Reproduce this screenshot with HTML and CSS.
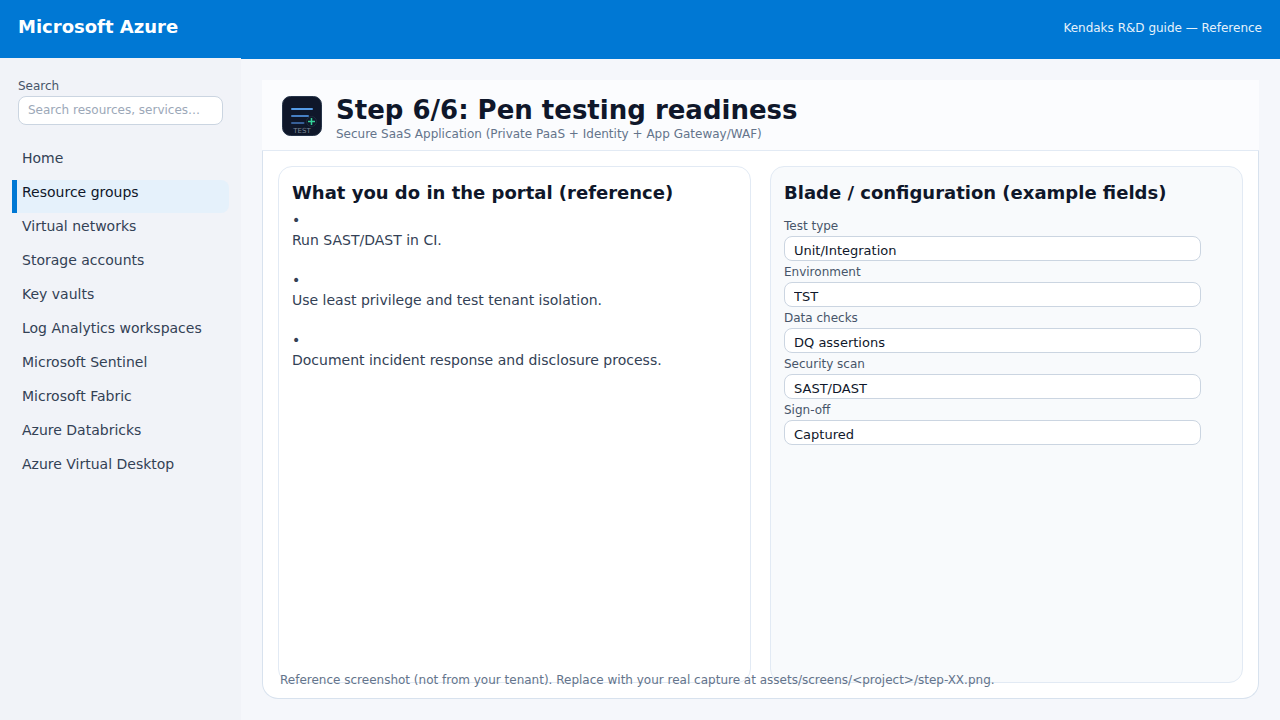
FILE: index.html
```html
<!DOCTYPE html>
<html lang="en">
<head>
<meta charset="utf-8">
<meta name="viewport" content="width=device-width, initial-scale=1">
<title>Step 6/6: Pen testing readiness</title>
<link rel="stylesheet" href="styles.css">
</head>
<body>
<header class="topbar">
  <div class="brand">Microsoft Azure</div>
  <div class="guide">Kendaks R&amp;D guide — Reference</div>
</header>
<div class="shell">
  <aside class="sidebar">
    <div class="search">
      <label for="search">Search</label>
      <input id="search" type="text" placeholder="Search resources, services…">
    </div>
    <nav class="nav">
      <a href="#">Home</a>
      <a href="#" class="active" aria-current="page">Resource groups</a>
      <a href="#">Virtual networks</a>
      <a href="#">Storage accounts</a>
      <a href="#">Key vaults</a>
      <a href="#">Log Analytics workspaces</a>
      <a href="#">Microsoft Sentinel</a>
      <a href="#">Microsoft Fabric</a>
      <a href="#">Azure Databricks</a>
      <a href="#">Azure Virtual Desktop</a>
    </nav>
  </aside>
  <main class="content">
    <section class="card">
      <div class="card-head">
        <svg class="logo" viewBox="0 0 40 40" aria-hidden="true">
          <rect x="0.5" y="0.5" width="39" height="39" rx="8" fill="#0f172a" stroke="#263449"/>
          <g stroke-width="2" stroke-linecap="round">
            <path d="M10 13H30" stroke="#559be6"/>
            <path d="M10 20H26" stroke="#467fc4"/>
            <path d="M10 27H21.500" stroke="#375f98"/>
          </g>
          <circle cx="29.500" cy="25.500" r="5" fill="#0f172a" stroke="#1e2d3d"/>
          <path d="M29.500 22V29M26 25.500H33" stroke="#34d399" stroke-width="1.500"/>
          <text x="20" y="37" text-anchor="middle" class="logo-text">TEST</text>
        </svg>
        <div>
          <h1>Step 6/6: Pen testing readiness</h1>
          <p class="subtitle">Secure SaaS Application (Private PaaS + Identity + App Gateway/WAF)</p>
        </div>
      </div>
      <div class="panels">
        <section class="panel">
          <h2>What you do in the portal (reference)</h2>
          <ul class="steps">
            <li>Run SAST/DAST in CI.</li>
            <li>Use least privilege and test tenant isolation.</li>
            <li>Document incident response and disclosure process.</li>
          </ul>
        </section>
        <section class="panel panel-muted">
          <h2>Blade / configuration (example fields)</h2>
          <form class="fields">
            <label for="type">Test type</label>
            <input id="type" type="text" value="Unit/Integration">
            <label for="env">Environment</label>
            <input id="env" type="text" value="TST">
            <label for="data">Data checks</label>
            <input id="data" type="text" value="DQ assertions">
            <label for="scan">Security scan</label>
            <input id="scan" type="text" value="SAST/DAST">
            <label for="sign">Sign-off</label>
            <input id="sign" type="text" value="Captured">
          </form>
        </section>
      </div>
      <p class="note">Reference screenshot (not from your tenant). Replace with your real capture at assets/screens/&lt;project&gt;/step-XX.png.</p>
    </section>
  </main>
</div>
</body>
</html>
```
FILE: styles.css
```css
* { box-sizing: border-box; }
body {
  margin: 0;
  min-height: 100vh;
  display: flex;
  flex-direction: column;
  background: #f5f7fb;
  color: #334155;
  font-family: "DejaVu Sans", sans-serif;
  font-size: 14px;
}
h1, h2, p, ul { margin: 0; padding: 0; }
input { font-family: inherit; }

.topbar {
  display: flex;
  justify-content: space-between;
  align-items: center;
  padding: 16px 18px 20px;
  background: #0078d4;
  color: #fff;
}
.brand { font-size: 18px; line-height: 22px; font-weight: 700; }
.guide { font-size: 12px; line-height: 18px; color: #e6f2fb; padding-top: 2px; }

.shell { flex: 1; display: flex; }
.sidebar {
  width: 241px;
  flex: none;
  padding: 19px 12px;
  background: #f1f3f8;
}
.search { padding: 0 6px; }
.search label {
  display: block;
  margin-bottom: 1px;
  font-size: 12px;
  line-height: 18px;
  color: #475569;
}
.search input {
  display: block;
  width: 205px;
  height: 29px;
  padding: 0 9px 2px;
  border: 1px solid #cbd5e1;
  border-radius: 8px;
  background: #fff;
  font-size: 12px;
}
.search input::placeholder { color: #9ca8b8; opacity: 1; }
.nav {
  display: grid;
  gap: 1px;
  margin-top: 21px;
}
.nav a {
  height: 33px;
  padding-left: 5px;
  border-left: 5px solid transparent;
  border-radius: 0 8px 8px 0;
  color: #334155;
  line-height: 24px;
  text-decoration: none;
}
.nav .active {
  border-left-color: #0078d4;
  background: #e5f1fb;
  color: #0f172a;
}

.content {
  flex: 1;
  display: flex;
  padding: 21px;
  border-top: 1px solid #0078d4;
}
.card {
  flex: 1;
  display: flex;
  flex-direction: column;
  border: 1px solid #d8e2ee;
  border-top: 0;
  border-radius: 0 0 16px 16px;
  background: #fff;
}
.card-head {
  display: flex;
  gap: 14px;
  margin: 0 -1px;
  padding: 16px 20px 7px;
  background: #fbfcfe;
  border-bottom: 1px solid #e2eaf4;
}
.logo { width: 40px; height: 40px; }
.logo-text { font-size: 7px; fill: #7c8798; }
h1 { color: #0f172a; font-size: 26px; line-height: 28px; }
.subtitle { margin-top: 1px; color: #64748b; font-size: 12px; line-height: 18px; }
.panels {
  flex: 1;
  display: grid;
  grid-template-columns: 1fr 1fr;
  gap: 19px;
  padding: 15px 15px 0;
}
.panel {
  padding: 13px;
  border: 1px solid #e2eaf4;
  border-radius: 14px;
  background: #fff;
}
.panel-muted { background: #f8fafc; }
h2 { color: #0f172a; font-size: 18px; line-height: 26px; }
.steps { list-style: none; margin-top: 4px; }
.steps li { line-height: 20px; margin-bottom: 20px; }
.steps li::before { content: "•"; display: block; }
.fields { display: grid; margin-top: 11px; padding-right: 28px; }
.fields label { margin-bottom: 1px; font-size: 12px; line-height: 18px; color: #475569; }
.fields input {
  width: 100%;
  height: 25px;
  margin-bottom: 2px;
  padding: 4px 9px 0;
  border: 1px solid #cbd5e1;
  border-radius: 8px;
  background: #fff;
  color: #0f172a;
  font-size: 13px;
}
.note {
  margin-top: -12px;
  padding: 0 17px 9px;
  position: relative;
  color: #64748b;
  font-size: 12px;
  line-height: 18px;
}
```
